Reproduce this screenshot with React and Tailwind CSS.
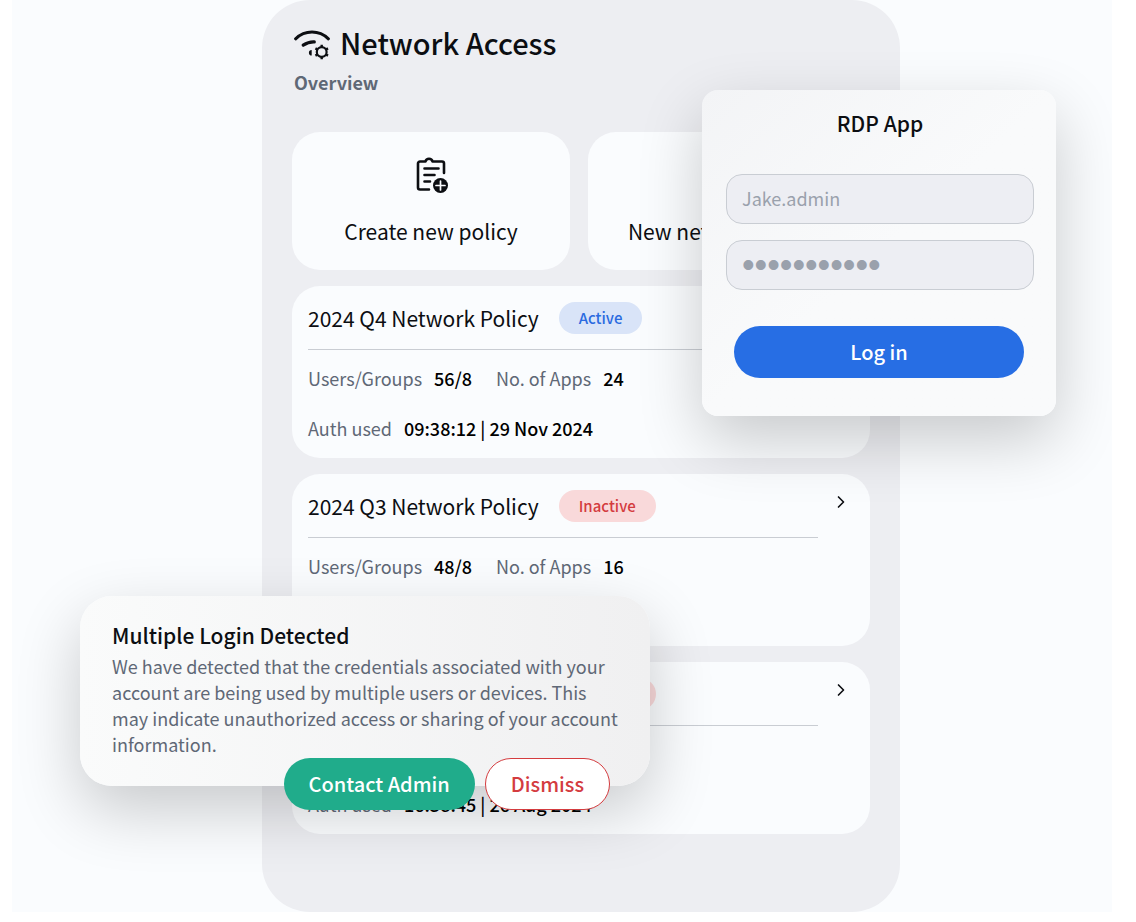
import React, { useState } from 'react';
import { ChevronRight, Network } from 'lucide-react';
import clsx from 'clsx';

const policies = [
  {
    name: '2024 Q4 Network Policy',
    active: true,
    users: '56/8',
    apps: 24,
    lastAuth: '09:38:12 | 29 Nov 2024',
  },
  {
    name: '2024 Q3 Network Policy',
    active: false,
    users: '48/8',
    apps: 16,
    lastAuth: '14:21:07 | 30 Sep 2024',
  },
  {
    name: '2024 Q2 Network Policy',
    active: false,
    users: '42/8',
    apps: 14,
    lastAuth: '16:38:45 | 26 Aug 2024',
  },
];

const WifiGearIcon = ({ className }) => (
  <svg viewBox="0 -4 36 36" fill="none" stroke="currentColor" strokeLinecap="round" className={className}>
    <path d="M1.6 10.8C11 1.800 25 1.800 34.400 10.800" strokeWidth="3" />
    <path d="M9.200 17.200C12.600 14.900 16.500 13.600 20.300 13.800" strokeWidth="3.200" />
    <path d="M17.700 22v5.600a2.800 2.800 0 0 1 0-5.600z" fill="currentColor" stroke="none" />
    <circle cx="27.700" cy="24" r="4.900" strokeWidth="2.200" />
    <path
      d="M27.700 19v-2.300M27.700 29v2.300M32 21.500l2-1.150M32 26.500l2 1.150M23.400 21.500l-2-1.150M23.400 26.500l-2 1.150"
      strokeWidth="2.400"
      strokeLinecap="butt"
    />
  </svg>
);

const ClipboardAddIcon = ({ className }) => (
  <svg viewBox="-2 -1 36 40" fill="none" stroke="currentColor" strokeLinecap="round" strokeLinejoin="round" className={className}>
    <path d="M14 32.500H5a2 2 0 0 1-2-2V6.500a2 2 0 0 1 2-2h5.500a3.600 3.600 0 0 1 7 0H27a2 2 0 0 1 2 2V16" strokeWidth="2.600" />
    <path d="M9.500 11.500h14M9.500 18h10M9.500 24.500h5.500" strokeWidth="2.600" />
    <circle cx="25.500" cy="28.500" r="7.500" fill="currentColor" stroke="none" />
    <path d="M25.500 24v9M21 28.500h9" stroke="#fafbfe" strokeWidth="1.700" />
  </svg>
);

const Stat = ({ label, value }) => (
  <div className="flex gap-3">
    <dt className="text-[#5f6876]">{label}</dt>
    <dd className="font-medium text-black">{value}</dd>
  </div>
);

const PolicyCard = ({ policy }) => (
  <li className="flex gap-[10px] rounded-[28px] bg-[#fafcfe] p-4">
    <div className="min-w-0 flex-1">
      <div className="flex items-center gap-5 border-b border-[#c9cdd3] pb-[15px]">
        <h2 className="text-[21px] leading-8">{policy.name}</h2>
        <span
          className={clsx(
            'rounded-full px-5 text-[15px] leading-8 font-medium',
            policy.active ? 'bg-[#d9e4f8] text-[#2b6be0]' : 'bg-[#f9d9da] text-[#d43c3f]'
          )}
        >
          {policy.active ? 'Active' : 'Inactive'}
        </span>
      </div>
      <dl className="mt-[14px] text-[18px] leading-7">
        <div className="flex gap-6">
          <Stat label="Users/Groups" value={policy.users} />
          <Stat label="No. of Apps" value={policy.apps} />
        </div>
        <div className="mt-[22px]">
          <Stat label="Auth used" value={policy.lastAuth} />
        </div>
      </dl>
    </div>
    <button type="button" aria-label={`Open ${policy.name}`} className="flex h-6 w-[26px] items-center justify-center">
      <ChevronRight className="h-5 w-5" />
    </button>
  </li>
);

const LoginCard = () => {
  const [username, setUsername] = useState('Jake.admin');
  const [password, setPassword] = useState('Network2024');

  return (
    <form
      onSubmit={(e) => e.preventDefault()}
      className="absolute top-[90px] left-[440px] w-[354px] rounded-[16px] bg-linear-to-br from-[#f3f4f6] via-[#f9fafb] to-[#f9fafb] pt-[19px] pr-[22px] pb-[38px] pl-6 shadow-[0_24px_64px_rgba(0,0,0,0.2)]"
    >
      <h2 className="text-center text-[21px] leading-7 font-medium">RDP App</h2>
      <div className="mt-[37px] flex flex-col gap-4">
        <input
          type="text"
          aria-label="Username"
          value={username}
          onChange={(e) => setUsername(e.target.value)}
          className="h-[50px] w-full rounded-[16px] border border-[#c9cdd3] bg-[#edeef3] px-[15px] pb-[2px] text-[18px] text-[#9aa1ac]"
        />
        <input
          type="password"
          aria-label="Password"
          value={password}
          onChange={(e) => setPassword(e.target.value)}
          className="h-[50px] w-full rounded-[16px] border border-[#c9cdd3] bg-[#edeef3] px-[15px] font-['Liberation_Sans',sans-serif] text-[36px] text-[#9aa1ac]"
        />
      </div>
      <div className="mt-9 pr-[10px] pl-2">
        <button type="submit" className="h-[52px] w-full rounded-full bg-[#276ee4] text-[20px] font-medium text-white">
          Log in
        </button>
      </div>
    </form>
  );
};

const LoginAlert = () => (
  <section
    role="alertdialog"
    aria-labelledby="alert-title"
    className="absolute top-[596px] -left-[182px] flex w-[570px] flex-col rounded-[32px] bg-linear-to-r from-[#fafbfb] to-[#f0f0f1] px-8 pt-[25px] shadow-[0_24px_64px_rgba(0,0,0,0.2)]"
  >
    <h2 id="alert-title" className="text-[21px] leading-7 font-medium">
      Multiple Login Detected
    </h2>
    <p className="mt-1 text-[18px] leading-[26px] text-[#5f6876]">
      We have detected that the credentials associated with your account are being used by multiple users or devices.
      This may indicate unauthorized access or sharing of your account information.
    </p>
    {/* Actions hang over the bottom edge of the card */}
    <div className="mt-px -mb-6 flex justify-end gap-[10px] pr-2 text-[20px] font-medium">
      <button type="button" className="h-[52px] rounded-full bg-[#20ac8b] px-[25px] text-white">
        Contact Admin
      </button>
      <button type="button" className="h-[52px] rounded-full border border-[#d43c3f] bg-white px-[25px] text-[#d43c3f]">
        Dismiss
      </button>
    </div>
  </section>
);

const App = () => {
  return (
    <div className="overflow-x-hidden bg-white pr-6 pb-[10px] pl-3 font-['Noto_Sans_CJK_SC','Noto_Sans',sans-serif] text-[#0c0e12]">
      <div className="flex justify-center overflow-hidden bg-[#fafcfe] pl-[38px]">
        <div className="relative w-[638px] shrink-0">
          <main className="rounded-[48px] bg-[#edeef2] px-[30px] pt-[22px] pb-[78px]">
            <header className="px-[2px]">
              <h1 className="flex items-center gap-[10px] text-[29px] leading-10 font-medium">
                <WifiGearIcon className="h-9 w-9" />
                Network Access
              </h1>
              <p className="mt-1 text-[18px] leading-8 font-bold text-[#5f6876]">Overview</p>
            </header>

            <div className="mt-[34px] flex gap-[18px]">
              <button type="button" className="flex h-[138px] w-[278px] flex-col items-center rounded-[28px] bg-[#fafcfe] pt-6">
                <ClipboardAddIcon className="h-10 w-9" />
                <span className="mt-[19px] text-[21px] leading-8">Create new policy</span>
              </button>
              <button type="button" className="flex h-[138px] flex-1 flex-col items-center rounded-[28px] bg-[#fafcfe] pt-6">
                <Network className="h-10 w-9" />
                <span className="mt-[19px] text-[21px] leading-8">New network subnet</span>
              </button>
            </div>

            <ul className="mt-4 flex flex-col gap-4">
              {policies.map((policy) => (
                <PolicyCard key={policy.name} policy={policy} />
              ))}
            </ul>
          </main>

          <LoginCard />
          <LoginAlert />
        </div>
      </div>
    </div>
  );
};

export default App;
